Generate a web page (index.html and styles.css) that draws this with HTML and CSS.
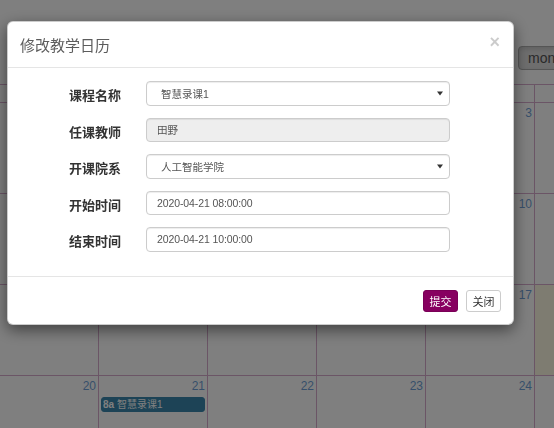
FILE: index.html
```html
<!DOCTYPE html>
<html lang="zh-CN">
<head>
<meta charset="utf-8">
<title>教学日历</title>
<link rel="stylesheet" href="styles.css">
</head>
<body>
<div class="calendar">
  <div class="toolbar">
    <div class="tb-left"><h2 class="tb-title">2020年4月</h2></div>
    <div class="btn-group">
      <button class="fc-btn active">month</button>
    </div>
  </div>
  <div class="grid">
    <div class="head">周一</div><div class="head">周二</div><div class="head">周三</div><div class="head">周四</div><div class="head">周五</div><div class="head">周六</div><div class="head">周日</div>

    <div class="day other"><div class="num">30</div></div>
    <div class="day other"><div class="num">31</div></div>
    <div class="day"><div class="num">1</div></div>
    <div class="day"><div class="num">2</div></div>
    <div class="day"><div class="num">3</div></div>
    <div class="day"><div class="num">4</div></div>
    <div class="day"><div class="num">5</div></div>

    <div class="day"><div class="num">6</div></div>
    <div class="day"><div class="num">7</div></div>
    <div class="day"><div class="num">8</div></div>
    <div class="day"><div class="num">9</div></div>
    <div class="day"><div class="num">10</div></div>
    <div class="day"><div class="num">11</div></div>
    <div class="day"><div class="num">12</div></div>

    <div class="day"><div class="num">13</div></div>
    <div class="day"><div class="num">14</div></div>
    <div class="day"><div class="num">15</div></div>
    <div class="day"><div class="num">16</div></div>
    <div class="day"><div class="num">17</div></div>
    <div class="day today"><div class="num">18</div></div>
    <div class="day"><div class="num">19</div></div>

    <div class="day"><div class="num">20</div></div>
    <div class="day"><div class="num">21</div><div class="event"><b>8a</b> 智慧录课1</div></div>
    <div class="day"><div class="num">22</div></div>
    <div class="day"><div class="num">23</div></div>
    <div class="day"><div class="num">24</div></div>
    <div class="day"><div class="num">25</div></div>
    <div class="day"><div class="num">26</div></div>

    <div class="day"><div class="num">27</div></div>
    <div class="day"><div class="num">28</div></div>
    <div class="day"><div class="num">29</div></div>
    <div class="day"><div class="num">30</div></div>
    <div class="day other"><div class="num">1</div></div>
    <div class="day other"><div class="num">2</div></div>
    <div class="day other"><div class="num">3</div></div>
  </div>
</div>

<div class="backdrop"></div>

<div class="modal">
  <div class="modal-header">
    <h4 class="modal-title">修改教学日历</h4>
    <button class="close" type="button">×</button>
  </div>
  <div class="modal-body">
    <div class="form-row">
      <label>课程名称</label>
      <div class="control select"><span>智慧录课1</span><svg width="6" height="5" viewBox="0 0 6 5"><path d="M0 0.5 L6 0.5 L3 4.5 Z" fill="#333"/></svg></div>
    </div>
    <div class="form-row">
      <label>任课教师</label>
      <input class="control disabled" type="text" value="田野" disabled>
    </div>
    <div class="form-row">
      <label>开课院系</label>
      <div class="control select"><span>人工智能学院</span><svg width="6" height="5" viewBox="0 0 6 5"><path d="M0 0.5 L6 0.5 L3 4.5 Z" fill="#333"/></svg></div>
    </div>
    <div class="form-row">
      <label>开始时间</label>
      <input class="control date" type="text" value="2020-04-21 08:00:00">
    </div>
    <div class="form-row">
      <label>结束时间</label>
      <input class="control date" type="text" value="2020-04-21 10:00:00">
    </div>
  </div>
  <div class="modal-footer">
    <button class="btn btn-primary" type="button">提交</button>
    <button class="btn btn-default" type="button">关闭</button>
  </div>
</div>
</body>
</html>
```

FILE: styles.css
```css
html, body {
  margin: 0;
  padding: 0;
}
body {
  width: 554px;
  height: 428px;
  overflow: hidden;
  background: #fff;
  font-family: "Liberation Sans", "Noto Sans CJK SC", sans-serif;
  font-size: 12px;
  color: #333;
}

/* ---------- calendar (under the backdrop) ---------- */
.calendar {
  margin-left: -11px;
  width: 765px;
}
.toolbar {
  display: grid;
  grid-template-columns: 529px auto;
  padding-top: 46px;
  margin-bottom: 14px;
  height: 24px;
}
.tb-title {
  margin: 0;
  font-size: 20px;
  line-height: 24px;
  text-align: center;
  font-weight: normal;
}
.btn-group {
  display: flex;
}
.fc-btn {
  height: 24px;
  padding: 0 9px;
  font-family: "Liberation Sans", sans-serif;
  font-size: 14px;
  color: #555;
  background: #dcdcdc;
  border: 1px solid #aaa;
  border-radius: 4px 0 0 4px;
  box-shadow: inset 0 2px 4px rgba(0, 0, 0, .12);
}
.grid {
  display: grid;
  grid-template-columns: repeat(7, 108px);
  grid-template-rows: 17px repeat(5, 90px);
  gap: 1px;
  padding: 1px;
  background: #d6aacc;
  width: max-content;
}
.head {
  background: #fff;
  text-align: center;
  font-weight: bold;
  line-height: 17px;
}
.day {
  background: #fff;
}
.day.today {
  background: #fcf8e3;
}
.num {
  text-align: right;
  padding: 2px 2px 0;
  line-height: 17px;
  font-size: 12px;
  color: #6f9fd6;
}
.day.other .num {
  opacity: .4;
}
.event {
  margin: 2px 2px 0;
  height: 15px;
  box-sizing: border-box;
  padding: 0 1px;
  border: 1px solid #3a87ad;
  border-radius: 3px;
  background: #3a87ad;
  color: #fff;
  font-size: 10px;
  line-height: 13px;
  white-space: nowrap;
  overflow: hidden;
}

/* ---------- backdrop & modal ---------- */
.backdrop {
  position: fixed;
  inset: 0;
  background: rgba(0, 0, 0, .5);
}
.modal {
  position: fixed;
  left: 7px;
  top: 21px;
  width: 507px;
  box-sizing: border-box;
  background: #fff;
  border: 1px solid rgba(0, 0, 0, .2);
  border-radius: 6px;
  box-shadow: 0 5px 15px rgba(0, 0, 0, .5);
}
.modal-header {
  display: flex;
  justify-content: space-between;
  align-items: flex-start;
  padding: 10px 13px 9px 12px;
  border-bottom: 1px solid #e5e5e5;
}
.modal-title {
  margin: 0;
  font-family: "Noto Sans CJK SC", sans-serif;
  font-size: 15px;
  line-height: 26px;
  font-weight: normal;
  color: #5c5c5c;
}
.close {
  margin-top: 1px;
  padding: 0;
  border: 0;
  background: none;
  font-family: "Liberation Sans", sans-serif;
  font-size: 18px;
  font-weight: bold;
  line-height: 18px;
  color: #000;
  opacity: .2;
}
.modal-body {
  padding: 13px 0 12px;
}
.form-row {
  display: grid;
  grid-template-columns: 113px 304px;
  column-gap: 25px;
  margin-bottom: 12px;
}
.form-row label {
  text-align: right;
  font-family: "Noto Sans CJK SC", sans-serif;
  font-size: 13px;
  font-weight: bold;
  line-height: 18px;
  padding-top: 5px;
  color: #333;
}
.control {
  height: 24.5px;
  width: 304px;
  box-sizing: border-box;
  margin: 0;
  border: 1px solid #ccc;
  border-radius: 4px;
  padding: 0 10px;
  font-family: "Liberation Sans", "Noto Sans CJK SC", sans-serif;
  font-size: 10.5px;
  color: #555;
  background: #fff;
  box-shadow: inset 0 1px 1px rgba(0, 0, 0, .075);
  outline: none;
}
.control.select {
  display: flex;
  align-items: center;
  justify-content: space-between;
  padding: 0 6px 0 14px;
}
.control.disabled {
  background: #eee;
  color: #555;
  -webkit-text-fill-color: #555;
  opacity: 1;
}
.control.date {
  letter-spacing: -0.1px;
}
.modal-footer {
  display: flex;
  justify-content: flex-end;
  gap: 8px;
  padding: 13.5px 12px 12px;
  border-top: 1px solid #e5e5e5;
}
.btn {
  height: 22px;
  box-sizing: border-box;
  padding: 0 5.5px;
  font-family: "Noto Sans CJK SC", sans-serif;
  font-size: 11px;
  line-height: 20px;
  border-radius: 3px;
  border: 1px solid;
}
.btn-primary {
  background: #870060;
  border-color: #7a0057;
  color: #fff;
}
.btn-default {
  background: #fff;
  border-color: #ccc;
  color: #333;
}
```
